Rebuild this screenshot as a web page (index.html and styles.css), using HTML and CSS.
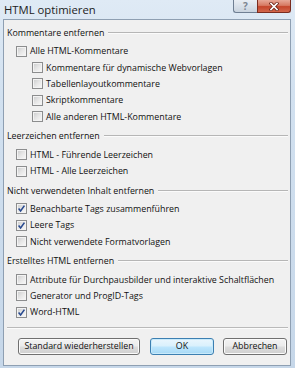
FILE: index.html
```html
<!DOCTYPE html>
<html lang="de">
<head>
    <meta charset="UTF-8">
    <title>HTML optimieren</title>
    <link rel="stylesheet" href="styles.css">
</head>
<body>
    <div class="window">
        <div class="titlebar">
            <span class="title">HTML optimieren</span>
            <div class="caption-buttons">
                <span class="cap-btn help">?</span>
                <span class="cap-btn close">
                    <svg width="10" height="9" viewBox="0 0 10 9">
                        <path d="M2 1.5 L8 7.5 M8 1.5 L2 7.5" stroke="#6b2518" stroke-width="3.2" stroke-linecap="square"/>
                        <path d="M2 1.5 L8 7.5 M8 1.5 L2 7.5" stroke="#fff" stroke-width="1.7" stroke-linecap="square"/>
                    </svg>
                </span>
            </div>
        </div>
        <div class="client">
            <div class="group">
                <div class="group-title">Kommentare entfernen</div>
                <label class="option"><span class="box"></span>Alle HTML-Kommentare</label>
                <label class="option sub"><span class="box"></span>Kommentare für dynamische Webvorlagen</label>
                <label class="option sub"><span class="box"></span>Tabellenlayoutkommentare</label>
                <label class="option sub"><span class="box"></span>Skriptkommentare</label>
                <label class="option sub"><span class="box"></span>Alle anderen HTML-Kommentare</label>
            </div>
            <div class="group">
                <div class="group-title">Leerzeichen entfernen</div>
                <label class="option"><span class="box"></span>HTML - Führende Leerzeichen</label>
                <label class="option"><span class="box"></span>HTML - Alle Leerzeichen</label>
            </div>
            <div class="group">
                <div class="group-title">Nicht verwendeten Inhalt entfernen</div>
                <label class="option"><span class="box"><svg width="9" height="9" viewBox="0 0 9 9"><path d="M1.6 4.6 L3.6 7 L7.4 1.6" fill="none" stroke="#284a90" stroke-width="1.6"/></svg></span>Benachbarte Tags zusammenführen</label>
                <label class="option"><span class="box"><svg width="9" height="9" viewBox="0 0 9 9"><path d="M1.6 4.6 L3.6 7 L7.4 1.6" fill="none" stroke="#284a90" stroke-width="1.6"/></svg></span>Leere Tags</label>
                <label class="option"><span class="box"></span>Nicht verwendete Formatvorlagen</label>
            </div>
            <div class="group">
                <div class="group-title">Erstelltes HTML entfernen</div>
                <label class="option"><span class="box"></span>Attribute für Durchpausbilder und interaktive Schaltflächen</label>
                <label class="option"><span class="box"></span>Generator und ProgID-Tags</label>
                <label class="option"><span class="box"><svg width="9" height="9" viewBox="0 0 9 9"><path d="M1.6 4.6 L3.6 7 L7.4 1.6" fill="none" stroke="#284a90" stroke-width="1.6"/></svg></span>Word-HTML</label>
            </div>
            <div class="separator"></div>
            <div class="buttons">
                <button class="btn std">Standard wiederherstellen</button>
                <button class="btn ok">OK</button>
                <button class="btn">Abbrechen</button>
            </div>
        </div>
    </div>
</body>
</html>
```

FILE: styles.css
```css
*{
    margin: 0;
    padding: 0;
    box-sizing: border-box;
}
body{
    width: 295px;
    height: 368px;
    overflow: hidden;
    font-family: "Open Sans", "Noto Sans", sans-serif;
    font-size: 8.85px;
    color: #111;
}
.window{
    height: 368px;
    display: flex;
    flex-direction: column;
    background: linear-gradient(180deg, #dfeaf5 0%, #d2e1f0 25%, #c6d7e9 100%);
}

/* Titelleiste */
.titlebar{
    height: 19px;
    display: flex;
    align-items: flex-start;
    padding-left: 4px;
}
.title{
    font-size: 11.3px;
    line-height: 19px;
    color: #1c1c1c;
}
.caption-buttons{
    margin-left: auto;
    margin-right: 4px;
    display: flex;
}
.cap-btn{
    height: 13px;
    display: flex;
    align-items: center;
    justify-content: center;
    border: 1px solid #6f7f93;
    border-top: none;
}
.help{
    width: 24px;
    border-right: none;
    border-radius: 0 0 0 3px;
    background: linear-gradient(180deg, #e9eef4 0%, #d9e1ea 50%, #c9d3de 100%);
    color: #7d8691;
    font-weight: bold;
    font-size: 10px;
    line-height: 1;
}
.close{
    width: 34px;
    border-color: #7a2c1f;
    border-radius: 0 0 3px 0;
    background: linear-gradient(180deg, #e7a897 0%, #d77a63 45%, #c5452b 55%, #d2674c 100%);
}

/* Inhalt */
.client{
    flex: 1;
    margin: 0 4px 2px 3px;
    border: 1px solid #8e9fb2;
    background: #f0f0f0;
    padding: 3px 2px 0 3px;
    display: flex;
    flex-direction: column;
}
.group + .group{
    margin-top: 1.5px;
}
.group-title{
    height: 20px;
    display: flex;
    align-items: center;
}
.group-title::after{
    content: "";
    flex: 1;
    margin-left: 4px;
    border-top: 1px solid #b6b6b6;
    border-bottom: 1px solid #fbfbfb;
}
.option{
    height: 16.4px;
    display: flex;
    align-items: center;
    padding-left: 9px;
}
.option.sub{
    padding-left: 25px;
}
.box{
    flex: none;
    width: 11px;
    height: 11px;
    margin-right: 3px;
    display: flex;
    align-items: center;
    justify-content: center;
    border: 1px solid #8c8d8e;
    background: linear-gradient(135deg, #c9cacb 0%, #e6e6e6 50%, #fafafa 100%);
    box-shadow: inset 0 0 0 1px #f3f3f3;
}
.box svg{
    flex: none;
}

.separator{
    margin-top: 6px;
    border-top: 1px solid #b9b9b9;
    border-bottom: 1px solid #fbfbfb;
}
.buttons{
    display: flex;
    justify-content: flex-end;
    gap: 9px;
    margin-top: 9px;
    margin-right: 1px;
}
.btn{
    width: 64px;
    height: 17px;
    font-family: inherit;
    font-size: inherit;
    color: #111;
    border: 1px solid #707070;
    border-radius: 3px;
    background: linear-gradient(180deg, #f3f3f3 0%, #ebebeb 48%, #dddddd 52%, #cfcfcf 100%);
    box-shadow: inset 0 0 0 1px #fbfbfb;
}
.btn.std{
    width: 122px;
    margin-right: 1px;
}
.btn.ok{
    border-color: #3c7fb1;
    background: linear-gradient(180deg, #eaf6fd 0%, #d9f0fc 48%, #bee6fd 52%, #a7d9f5 100%);
    box-shadow: inset 0 0 0 1px #c8eafb;
}
```
